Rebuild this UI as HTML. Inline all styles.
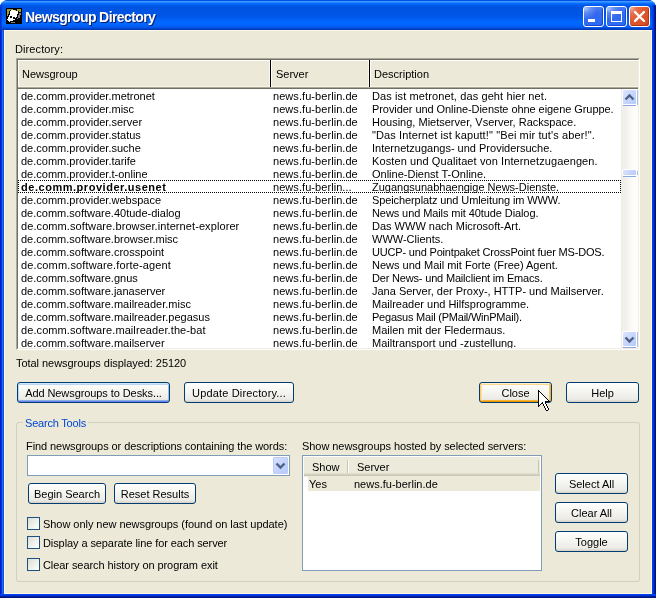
<!DOCTYPE html>
<html><head><meta charset="utf-8">
<style>
*{box-sizing:border-box}
html,body{margin:0;padding:0;width:656px;height:598px;overflow:hidden;background:#fff}
body{font-family:"Liberation Sans",sans-serif;font-size:11px;color:#000;position:relative}
.t,.row span,.btn,.ttext{will-change:transform}
.a{position:absolute}
.t{position:absolute;white-space:nowrap;line-height:13px;font-size:11px}
#win{position:absolute;left:0;top:0;width:656px;height:598px;border-radius:8px 8px 0 0;overflow:hidden;background:#0054E3}
#title{position:absolute;left:0;top:0;width:656px;height:30px;background:linear-gradient(to bottom,#0050E6 0px,#0050E6 1px,#3D98FF 1px,#3D98FF 2px,#2487FF 2px,#2487FF 3px,#066BFF 3px,#066BFF 4px,#0062F6 4px,#0062F6 5px,#0059EA 5px,#0059EA 6px,#0055E3 6px,#0055E3 7px,#0054E2 7px,#0054E2 8px,#0054E2 8px,#0054E2 9px,#0054E2 9px,#0054E2 10px,#0054E2 10px,#0054E2 11px,#0054E3 11px,#0054E3 12px,#0054E3 12px,#0054E3 13px,#0055E4 13px,#0055E4 14px,#0055E5 14px,#0055E5 15px,#0055E6 15px,#0055E6 16px,#0057E8 16px,#0057E8 17px,#0059EB 17px,#0059EB 18px,#005CF0 18px,#005CF0 19px,#0060F5 19px,#0060F5 20px,#0064FA 20px,#0064FA 21px,#0066FE 21px,#0066FE 22px,#0067FF 22px,#0067FF 23px,#0067FF 23px,#0067FF 24px,#0066FE 24px,#0066FE 25px,#0062F9 25px,#0062F9 26px,#005EF3 26px,#005EF3 27px,#0055E8 27px,#0055E8 28px,#0046D0 28px,#0046D0 29px,#003BB8 29px,#003BB8 30px)}
#lb{position:absolute;left:0;top:30px;width:4px;height:568px;background:linear-gradient(to right,#0019CF 0,#0019CF 1px,#0831D9 1px,#0831D9 2px,#1C6CF0 2px,#1C6CF0 3px,#0855DD 3px)}
#rb{position:absolute;left:652px;top:5px;width:4px;height:593px;background:linear-gradient(to right,#0043ED 0,#0043ED 1px,#0035DE 1px,#0035DE 2px,#0020A0 2px,#0020A0 3px,#001380 3px)}
#bb{position:absolute;left:0;top:594px;width:656px;height:4px;background:linear-gradient(to bottom,#0043ED 0,#0043ED 1px,#0035DE 1px,#0035DE 2px,#0020A0 2px,#0020A0 3px,#001380 3px)}
#client{position:absolute;left:4px;top:30px;width:648px;height:564px;background:#ECE9D8;border-top:1px solid #FFF8E0;border-left:1px solid #FFF8E0;border-right:1px solid #FFF8E0;border-bottom:1px solid #FFF8E0}
.ttext{position:absolute;left:25px;top:9px;font:bold 14px/17px "Liberation Sans",sans-serif;color:#fff;text-shadow:1px 1px 0 #0A1A6A;white-space:nowrap;letter-spacing:-0.6px}
.tbtn{position:absolute;top:6px;width:21px;height:21px;border:1px solid #fff;border-radius:3px;
background:linear-gradient(to bottom,rgba(255,255,255,0.12) 0,rgba(255,255,255,0) 35%),radial-gradient(circle at 8% 8%,#A0BCFA 0,#5A8AF2 18%,#3468EC 45%,#2C6CF6 75%,#2A6AF8 88%,#1448D8 100%);box-shadow:inset -1px -1px 0 #1A48D4}
.tbtn.close{background:radial-gradient(circle at 8% 8%,#F2A890 0,#E8704A 20%,#E0582E 50%,#DA5028 80%,#C23A12 100%);box-shadow:inset -1px -1px 0 #B83410}
/* listview */
#lv{position:absolute;left:16px;top:58px;width:624px;height:292px;border-top:1px solid #ACA899;border-left:1px solid #ACA899;border-right:1px solid #fff;border-bottom:1px solid #fff;background:#fff}
#lvi{position:absolute;left:0;top:0;width:622px;height:290px;border-top:1px solid #716F64;border-left:1px solid #716F64;border-right:1px solid #F1EFE2;border-bottom:1px solid #F1EFE2;overflow:hidden}
.rows{position:absolute;left:0;top:29px;width:603px;height:259px;overflow:hidden}
.row{position:absolute;left:0;width:603px;height:13px}
.c1,.c2,.c3{position:absolute;top:1px;white-space:nowrap;line-height:13px}
.c1{left:3px}.c2{left:255px;letter-spacing:0.06px}.c3{left:354px}
.btn{position:absolute;height:21px;border:1px solid #003C74;border-radius:3px;background:linear-gradient(to bottom,#FFFFFF 0%,#F6F6F2 40%,#ECEBE6 85%,#D6D0C5 100%);text-align:center;line-height:19px;padding-top:1px;white-space:nowrap}
.btn.def{box-shadow:inset 0 1px 0 #CEE7FF,inset 0 -1px 0 #6982EE,inset 1px 0 0 #B8D6FB,inset -1px 0 0 #A0BCF0,inset 0 2px 0 #BCD4F6,inset 0 -2px 0 #89ADE4}
.btn.hot{box-shadow:inset 0 1px 0 #FFF0CF,inset 0 -1px 0 #E59700,inset 1px 0 0 #FBCB6B,inset -1px 0 0 #F5B03A,inset 2px 0 0 #FDE0A0,inset -2px 0 0 #F9C46A,inset 0 2px 0 #FDD889,inset 0 -2px 0 #F8B330}
.sbb{position:absolute;left:604px;width:15px;height:16px;border:1px solid #fff;border-radius:2px;background:linear-gradient(135deg,#DCE5FD 0%,#C8D6FB 50%,#B7CBFB 100%)}
.sbs{position:absolute;left:605px;width:13px;height:1px;background:#8CA8E3}
.sbr{position:absolute;left:619px;width:1px;background:#A8C0F0}
.chk{position:absolute;left:27px;width:13px;height:13px;border:1px solid #1C5180;background:linear-gradient(135deg,#DCDCD7 0%,#F2F2EE 60%,#FFFFFF 100%)}
</style></head><body>
<div id="win">
 <div id="title"></div>
 <div id="lb"></div><div class="a" style="left:0;top:4px;width:1px;height:26px;background:#0030D0"></div><div class="a" style="left:1px;top:4px;width:1px;height:26px;background:rgba(0,40,210,0.5)"></div><div id="rb"></div><div id="bb"></div>
 <div id="client"></div>
</div>
<!-- title contents -->
<svg class="a" style="left:6px;top:8px" width="16" height="16" viewBox="0 0 16 16" shape-rendering="crispEdges"><rect x="0" y="0" width="16" height="16" fill="#000"/><rect x="1" y="1" width="6" height="1" fill="#A09C34"/><rect x="11" y="1" width="4" height="1" fill="#A09C34"/><rect x="1" y="2" width="3" height="1" fill="#A09C34"/><rect x="5" y="2" width="4" height="1" fill="#fff"/><rect x="9" y="2" width="1" height="1" fill="#C8C800"/><rect x="11" y="2" width="4" height="1" fill="#A09C34"/><rect x="1" y="3" width="2" height="1" fill="#A09C34"/><rect x="4" y="3" width="8" height="1" fill="#fff"/><rect x="13" y="3" width="2" height="1" fill="#A09C34"/><rect x="1" y="4" width="2" height="1" fill="#A09C34"/><rect x="4" y="4" width="8" height="1" fill="#fff"/><rect x="1" y="5" width="2" height="1" fill="#A09C34"/><rect x="4" y="5" width="8" height="1" fill="#fff"/><rect x="13" y="5" width="2" height="1" fill="#808080"/><rect x="1" y="6" width="1" height="1" fill="#A09C34"/><rect x="4" y="6" width="7" height="1" fill="#fff"/><rect x="13" y="6" width="2" height="1" fill="#808080"/><rect x="1" y="7" width="1" height="1" fill="#A09C34"/><rect x="3" y="7" width="8" height="1" fill="#fff"/><rect x="12" y="7" width="2" height="1" fill="#808080"/><rect x="3" y="8" width="1" height="1" fill="#fff"/><rect x="6" y="8" width="5" height="1" fill="#fff"/><rect x="12" y="8" width="2" height="1" fill="#808080"/><rect x="2" y="9" width="2" height="1" fill="#fff"/><rect x="6" y="9" width="1" height="1" fill="#fff"/><rect x="9" y="9" width="1" height="1" fill="#fff"/><rect x="12" y="9" width="2" height="1" fill="#808080"/><rect x="2" y="10" width="5" height="1" fill="#fff"/><rect x="11" y="10" width="1" height="1" fill="#808080"/><rect x="1" y="11" width="8" height="1" fill="#fff"/><rect x="2" y="12" width="5" height="1" fill="#fff"/><rect x="3" y="13" width="1" height="1" fill="#fff"/><rect x="5" y="14" width="4" height="1" fill="#808080"/></svg>
<div class="ttext">Newsgroup Directory</div>
<div class="tbtn" style="left:583px"><div class="a" style="left:4px;top:12px;width:7px;height:3px;background:#fff"></div></div>
<div class="tbtn" style="left:606px"><div class="a" style="left:4px;top:4px;width:11px;height:11px;border:1px solid #fff;border-top-width:3px"></div></div>
<div class="tbtn close" style="left:629px">
 <svg class="a" style="left:4px;top:4px" width="11" height="11" viewBox="0 0 11 11"><path d="M1,1 L10,10 M10,1 L1,10" stroke="#fff" stroke-width="2.3" stroke-linecap="square"/></svg>
</div>

<div class="t" style="left:15px;top:43px;letter-spacing:0.1px">Directory:</div>

<div id="lv"><div id="lvi">
 <!-- header -->
 <div class="a" style="left:0;top:0;width:620px;height:29px;background:#ECE9D8;border-top:1px solid #fff;border-left:1px solid #fff"></div>
 <div class="a" style="left:0;top:26px;width:620px;height:1px;background:#F7F4E4"></div>
 <div class="a" style="left:0;top:27px;width:620px;height:1px;background:#ACA899"></div>
 <div class="a" style="left:0;top:28px;width:620px;height:1px;background:#716F64"></div>
 <div class="a" style="left:251px;top:1px;width:1px;height:25px;background:#FBF7E6"></div>
 <div class="a" style="left:252px;top:0;width:1px;height:27px;background:#000"></div>
 <div class="a" style="left:253px;top:0;width:1px;height:27px;background:#fff"></div>
 <div class="a" style="left:350px;top:1px;width:1px;height:25px;background:#FBF7E6"></div>
 <div class="a" style="left:351px;top:0;width:1px;height:27px;background:#000"></div>
 <div class="a" style="left:352px;top:0;width:1px;height:27px;background:#fff"></div>
 <div class="t" style="left:4px;top:8px">Newsgroup</div>
 <div class="t" style="left:258px;top:8px">Server</div>
 <div class="t" style="left:356px;top:8px">Description</div>
 <div class="rows">
  <div class="row" style="top:0"><span class="c1">de.comm.provider.metronet</span><span class="c2">news.fu-berlin.de</span><span class="c3" style="letter-spacing:0.11px">Das ist metronet, das geht hier net.</span></div>
  <div class="row" style="top:13px"><span class="c1">de.comm.provider.misc</span><span class="c2">news.fu-berlin.de</span><span class="c3" style="letter-spacing:-0.065px">Provider und Online-Dienste ohne eigene Gruppe.</span></div>
  <div class="row" style="top:26px"><span class="c1">de.comm.provider.server</span><span class="c2">news.fu-berlin.de</span><span class="c3">Housing, Mietserver, Vserver, Rackspace.</span></div>
  <div class="row" style="top:39px"><span class="c1">de.comm.provider.status</span><span class="c2">news.fu-berlin.de</span><span class="c3" style="letter-spacing:0.12px">"Das Internet ist kaputt!" "Bei mir tut's aber!".</span></div>
  <div class="row" style="top:52px"><span class="c1">de.comm.provider.suche</span><span class="c2">news.fu-berlin.de</span><span class="c3">Internetzugangs- und Providersuche.</span></div>
  <div class="row" style="top:65px"><span class="c1">de.comm.provider.tarife</span><span class="c2">news.fu-berlin.de</span><span class="c3" style="letter-spacing:0.1px">Kosten und Qualitaet von Internetzugaengen.</span></div>
  <div class="row" style="top:78px"><span class="c1">de.comm.provider.t-online</span><span class="c2">news.fu-berlin.de</span><span class="c3">Online-Dienst T-Online.</span></div>
  <div class="row" style="top:91px;outline:1px dotted #000;outline-offset:-1px"><span class="c1" style="font-weight:bold;letter-spacing:0.53px">de.comm.provider.usenet</span><span class="c2">news.fu-berlin...</span><span class="c3">Zugangsunabhaengige News-Dienste.</span></div>
  <div class="row" style="top:104px"><span class="c1">de.comm.provider.webspace</span><span class="c2">news.fu-berlin.de</span><span class="c3" style="letter-spacing:-0.1px">Speicherplatz und Umleitung im WWW.</span></div>
  <div class="row" style="top:117px"><span class="c1">de.comm.software.40tude-dialog</span><span class="c2">news.fu-berlin.de</span><span class="c3" style="letter-spacing:-0.09px">News und Mails mit 40tude Dialog.</span></div>
  <div class="row" style="top:130px"><span class="c1" style="letter-spacing:0.09px">de.comm.software.browser.internet-explorer</span><span class="c2">news.fu-berlin.de</span><span class="c3">Das WWW nach Microsoft-Art.</span></div>
  <div class="row" style="top:143px"><span class="c1">de.comm.software.browser.misc</span><span class="c2">news.fu-berlin.de</span><span class="c3">WWW-Clients.</span></div>
  <div class="row" style="top:156px"><span class="c1">de.comm.software.crosspoint</span><span class="c2">news.fu-berlin.de</span><span class="c3" style="letter-spacing:-0.18px">UUCP- und Pointpaket CrossPoint fuer MS-DOS.</span></div>
  <div class="row" style="top:169px"><span class="c1" style="letter-spacing:0.14px">de.comm.software.forte-agent</span><span class="c2">news.fu-berlin.de</span><span class="c3">News und Mail mit Forte (Free) Agent.</span></div>
  <div class="row" style="top:182px"><span class="c1">de.comm.software.gnus</span><span class="c2">news.fu-berlin.de</span><span class="c3" style="letter-spacing:-0.18px">Der News- und Mailclient im Emacs.</span></div>
  <div class="row" style="top:195px"><span class="c1">de.comm.software.janaserver</span><span class="c2">news.fu-berlin.de</span><span class="c3">Jana Server, der Proxy-, HTTP- und Mailserver.</span></div>
  <div class="row" style="top:208px"><span class="c1">de.comm.software.mailreader.misc</span><span class="c2">news.fu-berlin.de</span><span class="c3">Mailreader und Hilfsprogramme.</span></div>
  <div class="row" style="top:221px"><span class="c1">de.comm.software.mailreader.pegasus</span><span class="c2">news.fu-berlin.de</span><span class="c3" style="letter-spacing:-0.22px">Pegasus Mail (PMail/WinPMail).</span></div>
  <div class="row" style="top:234px"><span class="c1" style="letter-spacing:0.086px">de.comm.software.mailreader.the-bat</span><span class="c2">news.fu-berlin.de</span><span class="c3">Mailen mit der Fledermaus.</span></div>
  <div class="row" style="top:247px"><span class="c1">de.comm.software.mailserver</span><span class="c2">news.fu-berlin.de</span><span class="c3">Mailtransport und -zustellung.</span></div>
 </div>
 <!-- scrollbar -->
 <div class="a" style="left:603px;top:29px;width:17px;height:259px;background:linear-gradient(to right,#EEEDE5 0,#F3F1EC 30%,#FDFDFA 70%,#FEFEFB 100%)"></div>
 <div class="sbb" style="top:29px"><svg class="a" style="left:1px;top:3px" width="11" height="8" viewBox="0 0 11 8"><path d="M1.5,6.5 L5.5,2.5 L9.5,6.5" fill="none" stroke="#4D6185" stroke-width="2.4"/></svg></div>
 <div class="sbs" style="top:45px"></div><div class="sbr" style="top:30px;height:15px"></div>
 <div class="sbb" style="top:271px"><svg class="a" style="left:1px;top:4px" width="11" height="8" viewBox="0 0 11 8"><path d="M1.5,1.5 L5.5,5.5 L9.5,1.5" fill="none" stroke="#4D6185" stroke-width="2.4"/></svg></div>
 <div class="sbs" style="top:287px"></div><div class="sbr" style="top:272px;height:15px"></div>
 <div class="sbb" style="top:109px;height:7px"></div>
 <div class="sbs" style="top:116px"></div><div class="sbr" style="top:111px;height:4px"></div>
</div></div>

<div class="t" style="left:16px;top:357px;letter-spacing:-0.05px">Total newsgroups displayed: 25120</div>

<div class="btn def" style="left:17px;top:382px;width:153px;letter-spacing:-0.08px">Add Newsgroups to Desks...</div>
<div class="btn" style="left:184px;top:382px;width:110px;letter-spacing:0.16px">Update Directory...</div>
<div class="btn hot" style="left:479px;top:382px;width:73px">Close</div>
<div class="btn" style="left:566px;top:382px;width:73px">Help</div>

<!-- group box -->
<div class="a" style="left:16px;top:422px;width:624px;height:160px;border:1px solid #D0D0BF;border-radius:3px"></div>
<div class="t" style="left:23px;top:417px;padding:0 2px;background:#ECE9D8;color:#0046D5;letter-spacing:-0.2px">Search Tools</div>

<div class="t" style="left:26px;top:440px;letter-spacing:-0.08px">Find newsgroups or descriptions containing the words:</div>
<div class="a" style="left:27px;top:455px;width:263px;height:21px;border:1px solid #7F9DB9;background:#fff"></div>
<div class="a" style="left:273px;top:457px;width:15px;height:17px;border-radius:2px;background:linear-gradient(135deg,#D8E2FD 0%,#C6D4FC 50%,#B4C9FC 100%);box-shadow:inset 0 0 0 1px #BCCDF7"><svg class="a" style="left:2px;top:5px" width="11" height="8" viewBox="0 0 11 8"><path d="M1.5,1.5 L5.5,5.5 L9.5,1.5" fill="none" stroke="#4D6185" stroke-width="2.4"/></svg></div>
<div class="btn" style="left:28px;top:483px;width:78px">Begin Search</div>
<div class="btn" style="left:114px;top:483px;width:82px">Reset Results</div>

<div class="chk" style="top:517px"></div><div class="t" style="left:43px;top:518px;letter-spacing:-0.045px">Show only new newsgroups (found on last update)</div>
<div class="chk" style="top:536px"></div><div class="t" style="left:43px;top:537px;letter-spacing:-0.09px">Display a separate line for each server</div>
<div class="chk" style="top:558px"></div><div class="t" style="left:43px;top:559px;letter-spacing:-0.07px">Clear search history on program exit</div>

<div class="t" style="left:302px;top:440px;letter-spacing:-0.06px">Show newsgroups hosted by selected servers:</div>
<div class="a" style="left:302px;top:455px;width:240px;height:116px;border:1px solid #7F9DB9;background:#fff"></div>
<div class="a" style="left:304px;top:457px;width:236px;height:20px;background:linear-gradient(to bottom,#EBEADB 0,#EBEADB 16px,#E2DECD 16px,#E2DECD 17px,#D6D2C2 17px,#D6D2C2 18px,#CBC7B8 18px,#CBC7B8 19px,#EBEADB 19px)"></div>
<div class="a" style="left:347px;top:460px;width:1px;height:13px;background:#C7C5B2"></div>
<div class="a" style="left:348px;top:460px;width:1px;height:13px;background:#fff"></div>
<div class="a" style="left:538px;top:460px;width:1px;height:13px;background:#C7C5B2"></div>
<div class="t" style="left:312px;top:461px">Show</div>
<div class="t" style="left:357px;top:461px">Server</div>
<div class="a" style="left:308px;top:477px;width:232px;height:14px;background:#ECE9D8"></div>
<div class="t" style="left:309px;top:478px">Yes</div>
<div class="t" style="left:354px;top:478px">news.fu-berlin.de</div>

<div class="btn" style="left:555px;top:473px;width:73px">Select All</div>
<div class="btn" style="left:555px;top:502px;width:73px">Clear All</div>
<div class="btn" style="left:555px;top:531px;width:73px">Toggle</div>

<svg class="a" style="left:538px;top:390px" width="13" height="21" viewBox="0 0 13 21" shape-rendering="crispEdges"><rect x="0" y="0" width="1" height="1" fill="#000"/><rect x="0" y="1" width="2" height="1" fill="#000"/><rect x="0" y="2" width="1" height="1" fill="#000"/><rect x="1" y="2" width="1" height="1" fill="#fff"/><rect x="2" y="2" width="1" height="1" fill="#000"/><rect x="0" y="3" width="1" height="1" fill="#000"/><rect x="1" y="3" width="2" height="1" fill="#fff"/><rect x="3" y="3" width="1" height="1" fill="#000"/><rect x="0" y="4" width="1" height="1" fill="#000"/><rect x="1" y="4" width="3" height="1" fill="#fff"/><rect x="4" y="4" width="1" height="1" fill="#000"/><rect x="0" y="5" width="1" height="1" fill="#000"/><rect x="1" y="5" width="4" height="1" fill="#fff"/><rect x="5" y="5" width="1" height="1" fill="#000"/><rect x="0" y="6" width="1" height="1" fill="#000"/><rect x="1" y="6" width="5" height="1" fill="#fff"/><rect x="6" y="6" width="1" height="1" fill="#000"/><rect x="0" y="7" width="1" height="1" fill="#000"/><rect x="1" y="7" width="6" height="1" fill="#fff"/><rect x="7" y="7" width="1" height="1" fill="#000"/><rect x="0" y="8" width="1" height="1" fill="#000"/><rect x="1" y="8" width="7" height="1" fill="#fff"/><rect x="8" y="8" width="1" height="1" fill="#000"/><rect x="0" y="9" width="1" height="1" fill="#000"/><rect x="1" y="9" width="8" height="1" fill="#fff"/><rect x="9" y="9" width="1" height="1" fill="#000"/><rect x="0" y="10" width="1" height="1" fill="#000"/><rect x="1" y="10" width="9" height="1" fill="#fff"/><rect x="10" y="10" width="1" height="1" fill="#000"/><rect x="0" y="11" width="1" height="1" fill="#000"/><rect x="1" y="11" width="6" height="1" fill="#fff"/><rect x="7" y="11" width="5" height="1" fill="#000"/><rect x="0" y="12" width="1" height="1" fill="#000"/><rect x="1" y="12" width="3" height="1" fill="#fff"/><rect x="4" y="12" width="1" height="1" fill="#000"/><rect x="5" y="12" width="2" height="1" fill="#fff"/><rect x="7" y="12" width="1" height="1" fill="#000"/><rect x="0" y="13" width="1" height="1" fill="#000"/><rect x="1" y="13" width="2" height="1" fill="#fff"/><rect x="3" y="13" width="2" height="1" fill="#000"/><rect x="5" y="13" width="2" height="1" fill="#fff"/><rect x="7" y="13" width="1" height="1" fill="#000"/><rect x="0" y="14" width="1" height="1" fill="#000"/><rect x="1" y="14" width="1" height="1" fill="#fff"/><rect x="2" y="14" width="1" height="1" fill="#000"/><rect x="5" y="14" width="1" height="1" fill="#000"/><rect x="6" y="14" width="2" height="1" fill="#fff"/><rect x="8" y="14" width="1" height="1" fill="#000"/><rect x="0" y="15" width="2" height="1" fill="#000"/><rect x="5" y="15" width="1" height="1" fill="#000"/><rect x="6" y="15" width="2" height="1" fill="#fff"/><rect x="8" y="15" width="1" height="1" fill="#000"/><rect x="0" y="16" width="1" height="1" fill="#000"/><rect x="6" y="16" width="1" height="1" fill="#000"/><rect x="7" y="16" width="2" height="1" fill="#fff"/><rect x="9" y="16" width="1" height="1" fill="#000"/><rect x="6" y="17" width="1" height="1" fill="#000"/><rect x="7" y="17" width="2" height="1" fill="#fff"/><rect x="9" y="17" width="1" height="1" fill="#000"/><rect x="7" y="18" width="1" height="1" fill="#000"/><rect x="8" y="18" width="2" height="1" fill="#fff"/><rect x="10" y="18" width="1" height="1" fill="#000"/><rect x="7" y="19" width="1" height="1" fill="#000"/><rect x="8" y="19" width="2" height="1" fill="#fff"/><rect x="10" y="19" width="1" height="1" fill="#000"/><rect x="8" y="20" width="2" height="1" fill="#000"/></svg>
</body></html>
